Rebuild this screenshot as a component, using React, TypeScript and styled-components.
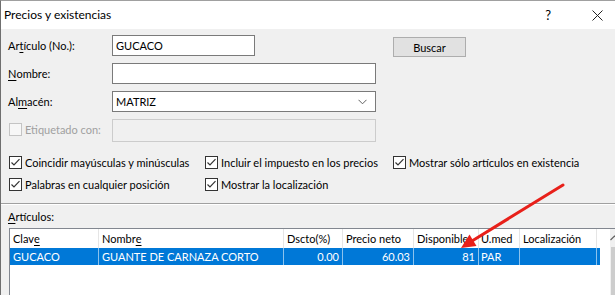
import React from "react";
import styled, { createGlobalStyle } from "styled-components";

const Global = createGlobalStyle`
  html, body { margin: 0; padding: 0; background: #f0f0f0; }
  body {
    font-family: "Lato", "Noto Sans", sans-serif;
    font-size: 11px;
    color: #000;
  }
`;

const Window = styled.div`
  position: relative;
  width: 615px;
  height: 295px;
  overflow: hidden;
  box-sizing: border-box;
  border-left: 1px solid #6f6f6f;
  border-top: 1px solid #a0a0a0;
  background: #f0f0f0;
  display: flex;
  flex-direction: column;
`;

const TitleBar = styled.div`
  height: 28px;
  flex-shrink: 0;
  background: #fff;
  display: flex;
  align-items: center;
  padding-left: 3px;
`;

const Title = styled.div`
  flex: 1;
  font-size: 12px;
  line-height: 16px;
`;

const Help = styled.span`
  font-size: 13px;
  margin-right: 41px;
`;

const CloseBox = styled.span`
  display: flex;
  width: 11px;
  height: 11px;
  margin-right: 12px;
`;

const Form = styled.div`
  display: grid;
  grid-template-columns: 104px 264px 17px 73px;
  grid-auto-rows: 21px;
  row-gap: 7px;
  padding: 6px 0 0 7px;
`;

const Label = styled.div<{ $disabled?: boolean }>`
  display: flex;
  align-items: center;
  white-space: nowrap;
  color: ${(p) => (p.$disabled ? "#a0a0a0" : "#000")};
  grid-column: 1;
`;

const Key = styled.u`
  text-decoration: underline;
  text-underline-offset: 2px;
`;

const TextBox = styled.div<{ $w?: number }>`
  grid-column: 2;
  box-sizing: border-box;
  width: ${(p) => (p.$w ? `${p.$w}px` : "100%")};
  height: 21px;
  border: 1px solid #7a7a7a;
  background: #fff;
  display: flex;
  align-items: center;
  padding: 0 3px;
`;

const SelectBox = styled(TextBox)`
  justify-content: space-between;
  padding-right: 8px;
`;

const DisabledBox = styled.div`
  grid-column: 2;
  box-sizing: border-box;
  height: 23px;
  border: 1px solid #cccccc;
  background: #f0f0f0;
`;

const Button = styled.div`
  grid-column: 4;
  grid-row: 1;
  box-sizing: border-box;
  height: 20px;
  margin-top: 2px;
  border: 1px solid #adadad;
  background: #e1e1e1;
  display: flex;
  align-items: center;
  justify-content: center;
`;

const Box = styled.span<{ $disabled?: boolean }>`
  box-sizing: border-box;
  width: 13px;
  height: 13px;
  flex-shrink: 0;
  border: 1px solid ${(p) => (p.$disabled ? "#c4c4c4" : "#333")};
  background: ${(p) => (p.$disabled ? "#f7f7f7" : "#fff")};
  display: flex;
  margin-right: 3px;
  margin-left: 1px;
`;

const Checks = styled.div`
  display: grid;
  grid-template-columns: 196px 188px 1fr;
  grid-auto-rows: 15px;
  row-gap: 7px;
  padding-left: 7px;
  margin-top: 15px;
`;

const CheckItem = styled.div`
  display: flex;
  align-items: center;
  white-space: nowrap;
`;

const Separator = styled.div`
  margin-top: 11px;
  border-top: 1px solid #a0a0a0;
  border-bottom: 1px solid #fff;
`;

const SectionLabel = styled.div`
  margin-top: 4px;
  padding-left: 7px;
  line-height: 16px;
`;

const Table = styled.div`
  margin-top: 3px;
  margin-left: 8px;
  flex: 1;
  display: flex;
  background: #fff;
  border-top: 1px solid #828790;
  border-left: 1px solid #828790;
`;

const List = styled.div`
  width: 590px;
  flex-shrink: 0;
`;

const cols = "89px 185px 59px 71px 65px 41px 77px";

const HeaderRow = styled.div`
  display: grid;
  grid-template-columns: ${cols};
  height: 19px;
`;

const HeadCell = styled.div<{ $pl?: number }>`
  display: flex;
  align-items: center;
  padding-left: ${(p) => p.$pl ?? 3}px;
  border-right: 1px solid #e5e5e5;
  white-space: nowrap;
`;

const DataRow = styled.div`
  display: grid;
  grid-template-columns: ${cols};
  height: 17px;
  background: #0078d7;
  color: #fff;
`;

const Cell = styled.div<{ $right?: boolean; $pl?: number }>`
  display: flex;
  align-items: center;
  justify-content: ${(p) => (p.$right ? "flex-end" : "flex-start")};
  padding: 0 3px 0 ${(p) => p.$pl ?? 3}px;
  border-right: 1px solid rgba(255, 255, 255, 0.55);
  white-space: nowrap;
  overflow: hidden;
`;

const ScrollBar = styled.div`
  width: 17px;
  margin-left: 10px;
  background: #f0f0f0;
  display: flex;
  flex-direction: column;
`;

const ScrollArrow = styled.div`
  height: 18px;
  display: flex;
  align-items: center;
  justify-content: center;
`;

const Thumb = styled.div`
  flex: 1;
  margin: 0 1px;
  background: #cdcdcd;
`;

const Overlay = styled.svg`
  position: absolute;
  left: -1px;
  top: -1px;
  pointer-events: none;
`;

const Check = () => (
  <svg width="11" height="11" viewBox="0 0 11 11">
    <polyline points="1.5,5.5 4,8 9.5,2.2" fill="none" stroke="#333" strokeWidth="1.2" />
  </svg>
);

const CheckBox = ({ children }: { children: React.ReactNode }) => (
  <CheckItem>
    <Box>
      <Check />
    </Box>
    {children}
  </CheckItem>
);

export default function App() {
  return (
    <>
      <Global />
      <Window>
        <TitleBar>
          <Title>Precios y existencias</Title>
          <Help>?</Help>
          <CloseBox>
            <svg width="11" height="11" viewBox="0 0 11 11">
              <path d="M0.5 0.5 L10.5 10.5 M10.5 0.5 L0.5 10.5" stroke="#222" strokeWidth="1" />
            </svg>
          </CloseBox>
        </TitleBar>

        <Form>
          <Label>
            Ar<Key>t</Key>ículo (No.):
          </Label>
          <TextBox $w={143}>GUCACO</TextBox>
          <Button>Buscar</Button>

          <Label>
            <Key>N</Key>ombre:
          </Label>
          <TextBox />

          <Label>
            Al<Key>m</Key>acén:
          </Label>
          <SelectBox>
            <span>MATRIZ</span>
            <svg width="9" height="6" viewBox="0 0 9 6">
              <polyline points="0.5,0.8 4.5,4.8 8.5,0.8" fill="none" stroke="#606060" strokeWidth="1" />
            </svg>
          </SelectBox>

          <Label $disabled>
            <Box $disabled />
            Etiquetado con:
          </Label>
          <DisabledBox />
        </Form>

        <Checks>
          <CheckBox>Coincidir mayúsculas y minúsculas</CheckBox>
          <CheckBox>Incluir el impuesto en los precios</CheckBox>
          <CheckBox>Mostrar sólo artículos en existencia</CheckBox>
          <CheckBox>Palabras en cualquier posición</CheckBox>
          <CheckBox>Mostrar la localización</CheckBox>
        </Checks>

        <Separator />
        <SectionLabel>
          <Key>A</Key>rtículos:
        </SectionLabel>

        <Table>
          <List>
            <HeaderRow>
              <HeadCell>
                Clav<Key>e</Key>
              </HeadCell>
              <HeadCell>
                Nombr<Key>e</Key>
              </HeadCell>
              <HeadCell>Dscto(%)</HeadCell>
              <HeadCell>Precio neto</HeadCell>
              <HeadCell>Disponible</HeadCell>
              <HeadCell $pl={2}>U.med</HeadCell>
              <HeadCell>Localización</HeadCell>
            </HeaderRow>
            <DataRow>
              <Cell>GUCACO</Cell>
              <Cell>GUANTE DE CARNAZA CORTO</Cell>
              <Cell $right>0.00</Cell>
              <Cell $right>60.03</Cell>
              <Cell $right>81</Cell>
              <Cell $pl={2}>PAR</Cell>
              <Cell />
            </DataRow>
          </List>
          <ScrollBar>
            <ScrollArrow>
              <svg width="9" height="6" viewBox="0 0 9 6">
                <polyline points="0.5,5 4.5,1 8.5,5" fill="none" stroke="#606060" strokeWidth="1.2" />
              </svg>
            </ScrollArrow>
            <Thumb />
          </ScrollBar>
        </Table>

        <Overlay width="615" height="295" viewBox="0 0 615 295">
          <line x1="563" y1="185" x2="472" y2="241" stroke="#e8201a" strokeWidth="3" strokeLinecap="round" />
          <polygon points="461,248 476.5,246 469.5,234.5" fill="#e8201a" />
        </Overlay>
      </Window>
    </>
  );
}
